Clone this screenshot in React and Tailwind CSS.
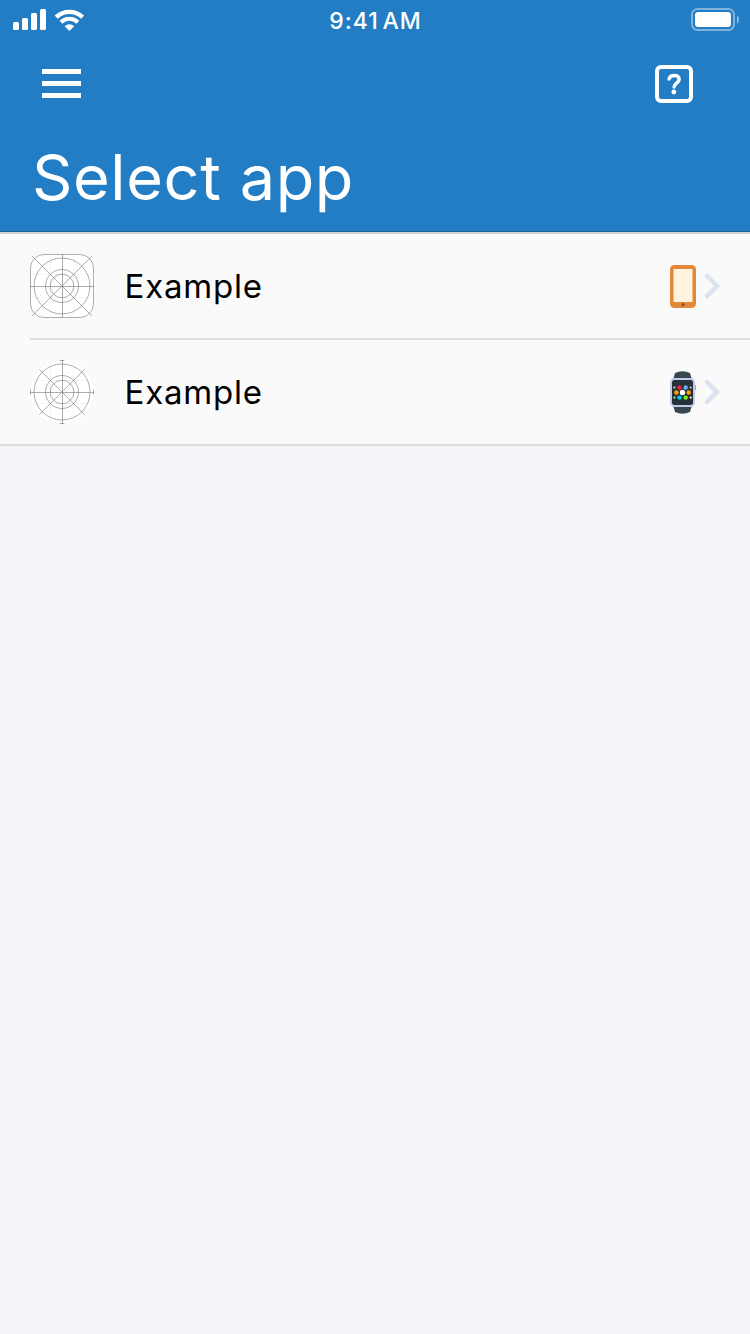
import React from "react";

const apps = [
  { id: 1, name: "Example", type: "phone" },
  { id: 2, name: "Example", type: "watch" },
];

function SignalIcon() {
  return (
    <svg width="33" height="22" viewBox="0 0 33 22" fill="#fff">
      <rect x="0" y="13" width="6" height="8" rx="1.6" />
      <rect x="9" y="9" width="6" height="12" rx="1.6" />
      <rect x="18" y="4" width="6" height="17" rx="1.6" />
      <rect x="27" y="0" width="6" height="21" rx="1.6" />
    </svg>
  );
}

function WifiIcon() {
  return (
    <svg width="30" height="22" viewBox="0 0 30 22" fill="none" stroke="#fff">
      <path d="M2.2 8.2a19 19 0 0 1 26.4 0" strokeWidth="4.4" />
      <path d="M7 13.2a12 12 0 0 1 16.8 0" strokeWidth="4.1" />
      <path
        d="M10.6 17.2a6.8 6.8 0 0 1 9.6 0L15.4 22z"
        fill="#fff"
        stroke="none"
      />
    </svg>
  );
}

function BatteryIcon() {
  return (
    <svg width="48" height="24" viewBox="0 0 48 24">
      <rect
        x="1"
        y="1"
        width="42"
        height="21"
        rx="5.5"
        fill="none"
        stroke="#fff"
        strokeOpacity="0.42"
        strokeWidth="2"
      />
      <rect x="4" y="4" width="36" height="15" rx="3.2" fill="#fff" />
      <path d="M46 7.5c2.6 1 2.6 7 0 8z" fill="#fff" fillOpacity="0.5" />
    </svg>
  );
}

function StatusBar() {
  return (
    <div className="grid h-10 grid-cols-3 items-center pl-[13px] pr-[11px]">
      <div className="flex items-center gap-[8px]">
        <SignalIcon />
        <WifiIcon />
      </div>
      <div className="pr-[1px] pt-[2px] text-center text-[23px] font-medium tracking-[1px] [word-spacing:-3.5px]">
        9:41 AM
      </div>
      <div className="flex justify-end">
        <BatteryIcon />
      </div>
    </div>
  );
}

function HelpIcon() {
  return (
    <svg width="38" height="38" viewBox="0 0 38 38" fill="none" stroke="#fff">
      <rect x="2" y="2" width="34" height="34" rx="4" strokeWidth="4" />
      <path
        d="M14.1 14c.5-2.3 2.4-3.6 5-3.6 3 0 5 1.5 5 4 0 3.7-5 3.900-5 7.6"
        strokeWidth="3.5"
        strokeLinecap="round"
      />
      <circle cx="18.8" cy="27" r="2.4" fill="#fff" stroke="none" />
    </svg>
  );
}

function Header() {
  return (
    <header className="h-[232px] border-b border-[#1b669f] bg-[#227dc4] text-white">
      <StatusBar />
      <div className="flex h-[88px] items-center justify-between pl-[42px] pr-[57px]">
        <button className="mb-[2px] flex flex-col gap-[7px]" aria-label="Menu">
          <span className="block h-[5px] w-[39px] bg-white" />
          <span className="block h-[5px] w-[39px] bg-white" />
          <span className="block h-[5px] w-[39px] bg-white" />
        </button>
        <button aria-label="Help">
          <HelpIcon />
        </button>
      </div>
      <h1 className="pl-[32px] pt-[9px] text-[63px] leading-[80px] tracking-[0.6px]">
        Select app
      </h1>
    </header>
  );
}

function PlaceholderIcon({ round }) {
  return (
    <svg width="64" height="64" viewBox="0 0 64 64" fill="none">
      {round ? (
        <circle cx="32" cy="32" r="32" fill="#fff" />
      ) : (
        <rect width="64" height="64" rx="14" fill="#fff" />
      )}
      <path
        d="M20.5 2v60M43.5 2v60M2 20.5h60M2 43.5h60"
        stroke="#f5f5f5"
        strokeWidth="1"
      />
      <g stroke="#808080" strokeWidth="0.65">
        {!round && <rect x="0.5" y="0.5" width="63" height="63" rx="13.5" />}
        <circle cx="32" cy="32" r="28" />
        <circle cx="32" cy="32" r="16.5" />
        <circle cx="32" cy="32" r="11.8" />
        <path d="M32.5 0v64M0 32.5h64" />
        {round ? (
          <path d="M9.4 9.4l45.2 45.2M54.6 9.4L9.4 54.6" />
        ) : (
          <path d="M2 2l60 60M62 2L2 62" />
        )}
        {round && <path d="M29.5 .5h5M29.5 63.5h5M.5 29.5v5M63.5 29.5v5" />}
      </g>
    </svg>
  );
}

function PhoneIcon() {
  return (
    <svg width="26" height="43" viewBox="0 0 26 43">
      <rect width="26" height="43" rx="4.5" fill="#e38839" />
      <rect x="3.5" y="4" width="19" height="33" fill="#fff3e0" />
      <circle cx="13" cy="39.7" r="1.6" fill="#8a5340" />
    </svg>
  );
}

function WatchIcon() {
  return (
    <svg width="26" height="43" viewBox="0 0 26 43">
      <path
        d="M5 2Q12.5-1.5 20 2L22 9H3zM3 34h19l-2 7q-7.5 3.500-15 0z"
        fill="#37474f"
      />
      <rect x="23" y="13.5" width="3" height="6" rx="1.5" fill="#9fa8da" />
      <rect x="0" y="7" width="25" height="29" rx="4.5" fill="#c0caea" />
      <rect x="2" y="9" width="21" height="25" rx="2.5" fill="#263238" />
      <circle cx="9.5" cy="16.5" r="2.2" fill="#f0223c" />
      <circle cx="15.7" cy="16.5" r="2.2" fill="#64aef5" />
      <circle cx="6.4" cy="21.5" r="2.2" fill="#ff9c0a" />
      <circle cx="12.5" cy="21.5" r="2.7" fill="#fff" />
      <circle cx="18.7" cy="21.5" r="2.2" fill="#ffa000" />
      <circle cx="9.5" cy="26.6" r="2.2" fill="#00c8f0" />
      <circle cx="15.7" cy="26.6" r="2.2" fill="#76f010" />
      <circle cx="4.4" cy="16.5" r="1.1" fill="#cfd8dc" />
      <circle cx="20.7" cy="16.5" r="1.1" fill="#cfd8dc" />
      <circle cx="4.4" cy="26.6" r="1.1" fill="#b9e6b0" />
      <circle cx="20.7" cy="26.6" r="1.1" fill="#fff59d" />
    </svg>
  );
}

function ChevronIcon() {
  return (
    <svg width="16" height="26" viewBox="0 0 16 26" fill="none">
      <path d="M1.6 1.6L13 13 1.6 24.4" stroke="#dbe3ef" strokeWidth="4.4" />
    </svg>
  );
}

function AppRow({ app, last }) {
  const isWatch = app.type === "watch";

  return (
    <li className="pl-[30px]">
      <button
        className={`flex h-[106px] w-full items-center border-b-2 pr-[30px] ${
          last ? "border-transparent" : "border-[#dedede]"
        }`}
      >
        <PlaceholderIcon round={isWatch} />
        <span className="ml-[30.5px] flex-1 pt-[2px] text-left text-[33px] tracking-[0.8px] text-black">
          {app.name}
        </span>
        <span className="flex items-center gap-[8px]">
          {isWatch ? <WatchIcon /> : <PhoneIcon />}
          <ChevronIcon />
        </span>
      </button>
    </li>
  );
}

export default function App() {
  return (
    <div className="min-h-screen w-full bg-[#f2f4f8] font-['Inter',sans-serif]">
      <Header />
      <ul className="h-[214px] border-b-2 border-t-2 border-b-[#dedede] border-t-[#d2d2d2] bg-[#fafafa]">
        {apps.map((app, i) => (
          <AppRow key={app.id} app={app} last={i === apps.length - 1} />
        ))}
      </ul>
    </div>
  );
}
